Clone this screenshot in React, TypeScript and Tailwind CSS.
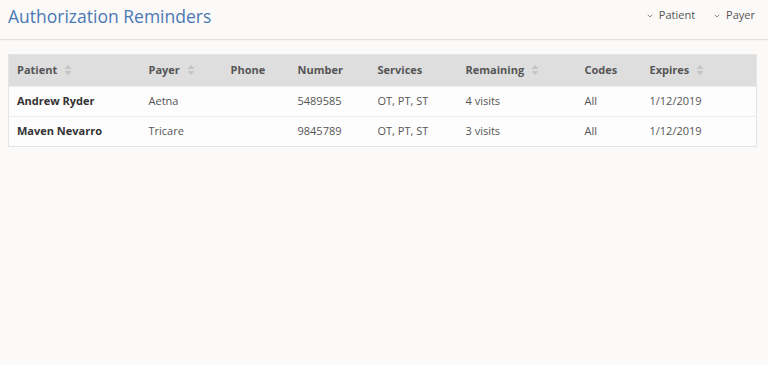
import { ChevronDown } from "lucide-react";

const rows = [
  { patient: "Andrew Ryder", payer: "Aetna", phone: "", number: "5489585", services: "OT, PT, ST", remaining: "4 visits", codes: "All", expires: "1/12/2019" },
  { patient: "Maven Nevarro", payer: "Tricare", phone: "", number: "9845789", services: "OT, PT, ST", remaining: "3 visits", codes: "All", expires: "1/12/2019" },
];

const cols = [
  { label: "Patient", w: "w-[132px]", sort: true },
  { label: "Payer", w: "w-[82px]", sort: true },
  { label: "Phone", w: "w-[67px]", sort: false },
  { label: "Number", w: "w-[80px]", sort: false },
  { label: "Services", w: "w-[88px]", sort: false },
  { label: "Remaining", w: "w-[119px]", sort: true },
  { label: "Codes", w: "w-[65px]", sort: false },
  { label: "Expires", w: "", sort: true },
];

const SortIcon = () => (
  <svg width="8" height="12" viewBox="0 0 8 12" className="inline-block ml-[7px] -mt-[2px] align-middle">
    <path d="M4 1 L7.5 5 H0.5 Z" fill="#c4c4c4" />
    <path d="M4 11 L7.5 7 H0.5 Z" fill="#c4c4c4" />
  </svg>
);

const App = () => {
  return (
    <div className="w-[768px] h-[365px] bg-[#fbfaf8] font-['Open_Sans',sans-serif] text-[11px] text-[#333]">
      <div className="h-[40px] flex items-center justify-between pl-[8px] pr-[13px] border-b border-[#e2e1de] shadow-[0_1px_2px_rgba(0,0,0,0.04)]">
        <h1 className="text-[17.5px] text-[#4a78b5] leading-none -mt-[6px]">Authorization Reminders</h1>
        <div className="flex items-center gap-[18px] text-[#555] -mt-[8px]">
          <span className="flex items-center gap-[5px]"><ChevronDown className="size-[8px]" strokeWidth={2} />Patient</span>
          <span className="flex items-center gap-[5px]"><ChevronDown className="size-[8px]" strokeWidth={2} />Payer</span>
        </div>
      </div>
      <div className="px-[8px] pt-[14px]">
        <table className="w-[749px] table-fixed border-collapse border border-[#e4e4e4]">
          <thead>
            <tr className="bg-[#dedede] h-[32px]">
              {cols.map((c) => (
                <th key={c.label} className={`${c.w} text-left font-bold text-[#555] pl-[8px]`}>
                  {c.label}
                  {c.sort && <SortIcon />}
                </th>
              ))}
            </tr>
          </thead>
          <tbody className="bg-[#fdfdfd]">
            {rows.map((r) => (
              <tr key={r.patient} className="h-[30px] border-t border-[#ececec]">
                <td className="pl-[8px] font-bold text-[#333]">{r.patient}</td>
                <td className="pl-[8px] text-[#555]">{r.payer}</td>
                <td className="pl-[8px] text-[#555]">{r.phone}</td>
                <td className="pl-[8px] text-[#555]">{r.number}</td>
                <td className="pl-[8px] text-[#555]">{r.services}</td>
                <td className="pl-[8px] text-[#555]">{r.remaining}</td>
                <td className="pl-[8px] text-[#555]">{r.codes}</td>
                <td className="pl-[8px] text-[#555]">{r.expires}</td>
              </tr>
            ))}
          </tbody>
        </table>
      </div>
    </div>
  );
};

export default App;
